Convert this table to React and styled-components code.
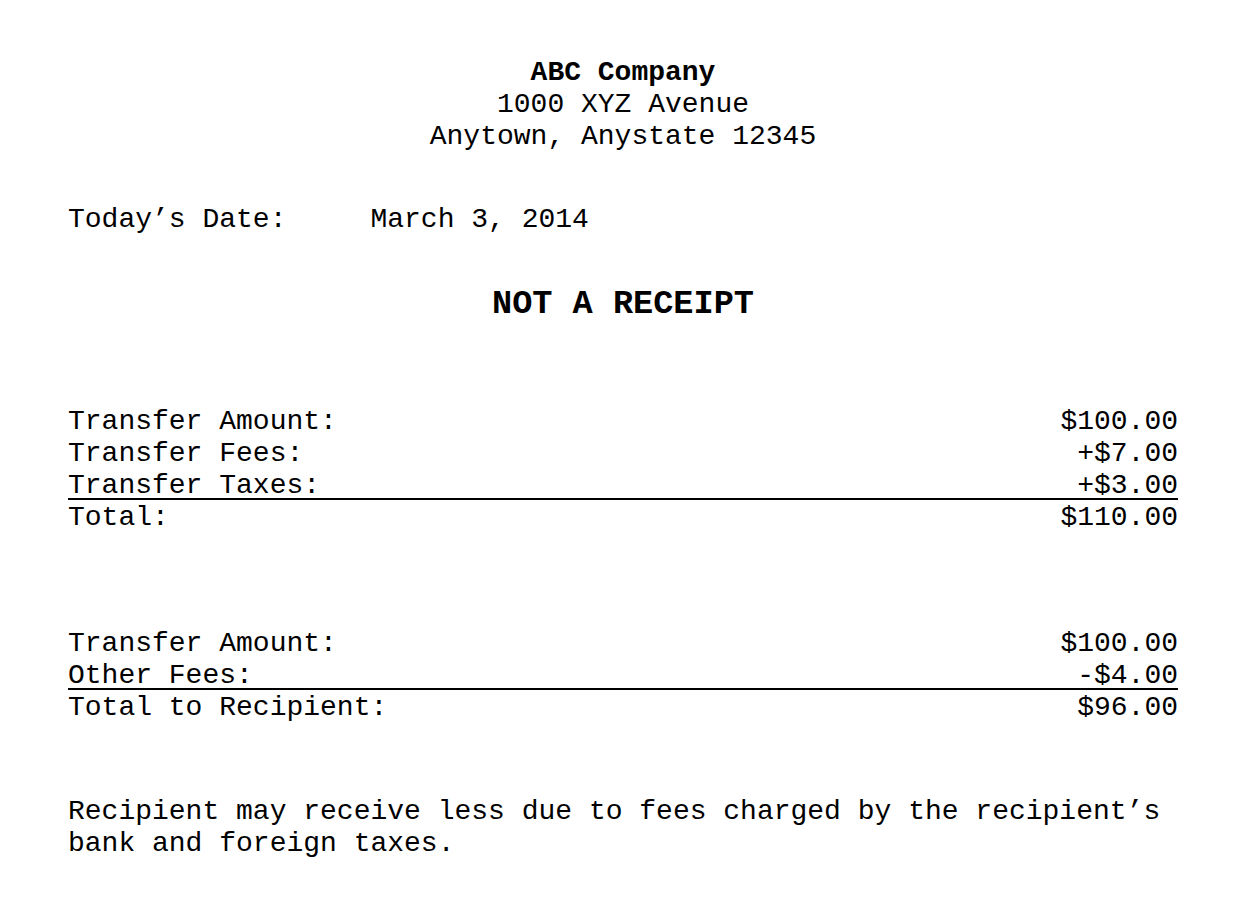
import React from "react";
import styled, { createGlobalStyle } from "styled-components";

const Global = createGlobalStyle`
  html, body { margin: 0; padding: 0; background: #fff; }
  body {
    font-family: "Courier New", "Nimbus Mono PS", "Nimbus Mono L", "FreeMono", Courier, "Liberation Mono", monospace;
    font-size: 28px;
    line-height: 32px;
    color: #000;
  }
`;

const Page = styled.div`
  width: 1110px;
  padding: 57px 70px 40px 68px;
  box-sizing: content-box;
`;

const Header = styled.header`
  display: flex;
  flex-direction: column;
  align-items: center;
  text-align: center;
`;

const HeaderLine = styled.div`
  font-weight: ${(p) => (p.$bold ? 700 : 400)};
  white-space: pre;
`;

const DateRow = styled.div`
  display: flex;
  margin-top: 51px;
  white-space: pre;
`;

const DateLabel = styled.span`
  width: 18ch;
  flex: none;
`;

const Title = styled.h1`
  margin: 52px 0 0;
  font-size: 33.6px;
  line-height: 32px;
  font-weight: 700;
  text-align: center;
`;

const Section = styled.section`
  margin-top: ${(p) => p.$gap}px;
  display: flex;
  flex-direction: column;
`;

const Row = styled.div`
  display: flex;
  justify-content: space-between;
  white-space: pre;
  box-sizing: border-box;
  height: ${(p) => (p.$rule ? "30px" : "32px")};
  margin-bottom: ${(p) => (p.$rule ? "2px" : "0")};
  border-bottom: ${(p) => (p.$rule ? "2px solid #000" : "none")};
`;

const Note = styled.p`
  margin: 72px 0 0;
  width: 66ch;
`;

const sections = [
  {
    gap: 86,
    rows: [
      ["Transfer Amount:", "$100.00"],
      ["Transfer Fees:", "+$7.00"],
      ["Transfer Taxes:", "+$3.00", true],
      ["Total:", "$110.00"],
    ],
  },
  {
    gap: 94,
    rows: [
      ["Transfer Amount:", "$100.00"],
      ["Other Fees:", "-$4.00", true],
      ["Total to Recipient:", "$96.00"],
    ],
  },
];

export default function App() {
  return (
    <>
      <Global />
      <Page>
        <Header>
          <HeaderLine $bold>ABC Company</HeaderLine>
          <HeaderLine>1000 XYZ Avenue</HeaderLine>
          <HeaderLine>Anytown, Anystate 12345</HeaderLine>
        </Header>
        <DateRow>
          <DateLabel>Today’s Date:</DateLabel>
          <span>March 3, 2014</span>
        </DateRow>
        <Title>NOT A RECEIPT</Title>
        {sections.map((s, i) => (
          <Section key={i} $gap={s.gap}>
            {s.rows.map(([label, value, rule], j) => (
              <Row key={j} $rule={rule}>
                <span>{label}</span>
                <span>{value}</span>
              </Row>
            ))}
          </Section>
        ))}
        <Note>
          Recipient may receive less due to fees charged by the recipient’s bank and foreign taxes.
        </Note>
      </Page>
    </>
  );
}
